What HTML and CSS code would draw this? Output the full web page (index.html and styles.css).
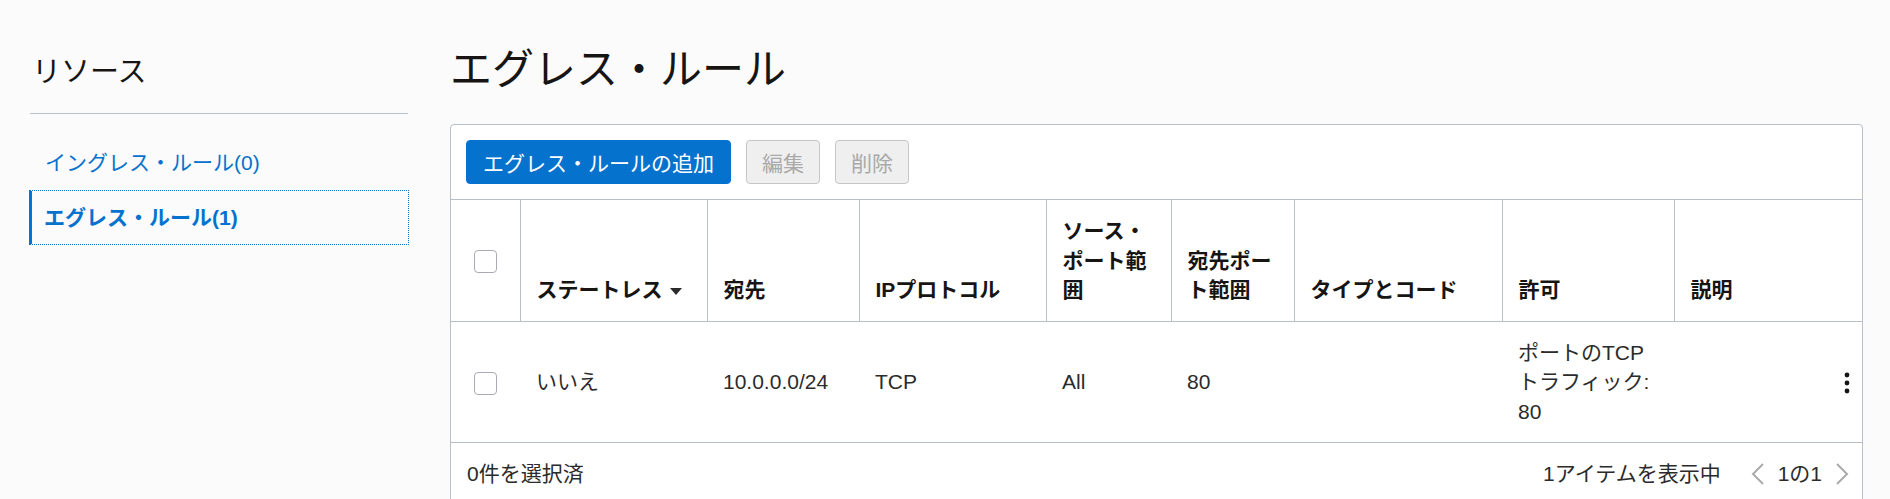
FILE: index.html
```html
<!DOCTYPE html>
<html lang="ja">
<head>
  <meta charset="UTF-8">
  <title>エグレス・ルール</title>
  <link rel="stylesheet" href="styles.css">
</head>
<body>
  <div class="page">
    <aside class="sidebar">
      <h2 class="sidebar-title">リソース</h2>
      <ul class="resource-list">
        <li class="resource-item"><a href="#">イングレス・ルール(0)</a></li>
        <li class="resource-item active"><a href="#">エグレス・ルール(1)</a></li>
      </ul>
    </aside>

    <main class="content">
      <h1 class="page-title">エグレス・ルール</h1>

      <div class="card">
        <div class="toolbar">
          <button class="btn btn-primary">エグレス・ルールの追加</button>
          <button class="btn" disabled>編集</button>
          <button class="btn" disabled>削除</button>
        </div>

        <table class="rules-table">
          <colgroup>
            <col style="width: 69px">
            <col style="width: 187px">
            <col style="width: 152px">
            <col style="width: 187px">
            <col style="width: 125px">
            <col style="width: 123px">
            <col style="width: 208px">
            <col style="width: 172px">
            <col>
          </colgroup>
          <thead>
            <tr>
              <th class="check-cell"><span class="checkbox"></span></th>
              <th>ステートレス <span class="sort-caret"></span></th>
              <th>宛先</th>
              <th>IPプロトコル</th>
              <th>ソース・ポート範囲</th>
              <th>宛先ポート範囲</th>
              <th>タイプとコード</th>
              <th>許可</th>
              <th>説明</th>
            </tr>
          </thead>
          <tbody>
            <tr>
              <td class="check-cell"><span class="checkbox"></span></td>
              <td>いいえ</td>
              <td>10.0.0.0/24</td>
              <td>TCP</td>
              <td>All</td>
              <td>80</td>
              <td></td>
              <td>ポートのTCPトラフィック: 80</td>
              <td class="actions-cell">
                <svg class="kebab" width="6" height="22" viewBox="0 0 6 22">
                  <circle cx="3" cy="3" r="2.4" fill="#161513"/>
                  <circle cx="3" cy="11" r="2.4" fill="#161513"/>
                  <circle cx="3" cy="19" r="2.4" fill="#161513"/>
                </svg>
              </td>
            </tr>
          </tbody>
        </table>

        <div class="table-footer">
          <span>0件を選択済</span>
          <div class="pager">
            <span>1アイテムを表示中</span>
            <svg class="chevron" width="14" height="22" viewBox="0 0 14 22">
              <polyline points="12,1 2,11 12,21" fill="none" stroke="#aaaaaa" stroke-width="2"/>
            </svg>
            <span>1の1</span>
            <svg class="chevron" width="14" height="22" viewBox="0 0 14 22">
              <polyline points="2,1 12,11 2,21" fill="none" stroke="#aaaaaa" stroke-width="2"/>
            </svg>
          </div>
        </div>
      </div>
    </main>
  </div>
</body>
</html>
```

FILE: styles.css
```css
body {
    margin: 0;
    padding: 0;
    background: #fbfbfb;
    color: #161513;
    font-family: "Liberation Sans", "Noto Sans CJK JP", sans-serif;
    font-size: 21px;
    overflow: hidden;
}

.page {
    display: flex;
    gap: 41px;
    padding: 0 27px 0 29px;
}

/* sidebar */

.sidebar {
    width: 380px;
    flex-shrink: 0;
    padding-top: 55px;
}

.sidebar-title {
    margin: 0 1px;
    padding: 0 0 23px 2px;
    font-size: 29px;
    font-weight: normal;
    line-height: 35px;
    border-bottom: 1px solid #b9bfc7;
}

.resource-list {
    list-style: none;
    margin: 21px 0 0 0;
    padding: 0;
}

.resource-item a {
    display: block;
    height: 53px;
    line-height: 53px;
    padding: 0 12px 0 15px;
    border: 1px solid transparent;
    color: #0572ce;
    text-decoration: none;
    font-size: 21px;
}

.resource-item.active a {
    border: 1px dotted #0572ce;
    border-left: 3px solid #0572ce;
    padding-left: 12px;
    font-weight: bold;
}

/* main */

.content {
    flex: 1;
    min-width: 0;
    padding-top: 45px;
}

.page-title {
    margin: 0 0 29px 0;
    font-size: 42px;
    font-weight: normal;
    line-height: 50px;
}

.card {
    background: #fff;
    border: 1px solid #b9bfc7;
    border-radius: 4px;
}

.toolbar {
    display: flex;
    gap: 15px;
    padding: 15px;
    border-bottom: 1px solid #b9bfc7;
}

.btn {
    height: 44px;
    padding: 0 15px;
    font-family: inherit;
    font-size: 21px;
    border-radius: 4px;
    border: 1px solid #c4c6ca;
    background: #efefef;
    color: #a9a9a9;
}

.btn-primary {
    padding: 0 16px;
    background: #0572ce;
    border-color: #0572ce;
    color: #fff;
    cursor: pointer;
}

.rules-table {
    width: 100%;
    table-layout: fixed;
    border-collapse: collapse;
}

.rules-table th {
    padding: 16px;
    text-align: left;
    vertical-align: bottom;
    font-weight: bold;
    line-height: 29.5px;
    border-left: 1px solid #b9bfc7;
    border-bottom: 1px solid #b9bfc7;
}

.rules-table th:first-child {
    border-left: none;
}

.rules-table td {
    padding: 16px;
    vertical-align: middle;
    line-height: 29.5px;
    color: #2b2b2b;
    border-bottom: 1px solid #b9bfc7;
}

.rules-table .check-cell {
    padding: 0;
    text-align: center;
    vertical-align: middle;
}

.checkbox {
    display: inline-block;
    width: 21px;
    height: 21px;
    border: 1px solid #a8acb2;
    border-radius: 4px;
    background: #fff;
    vertical-align: middle;
}

.sort-caret {
    display: inline-block;
    width: 0;
    height: 0;
    margin-left: 2px;
    border-left: 6px solid transparent;
    border-right: 6px solid transparent;
    border-top: 7px solid #2b2b2b;
    vertical-align: middle;
}

.rules-table .actions-cell {
    text-align: right;
    padding-right: 12px;
}

.kebab {
    vertical-align: middle;
}

.table-footer {
    display: flex;
    justify-content: space-between;
    align-items: center;
    padding: 16px 13px 16px 16px;
    line-height: 30px;
    color: #2b2b2b;
}

.pager {
    display: flex;
    align-items: center;
    gap: 13px;
}

.pager .chevron {
    display: block;
}

.pager span:first-child {
    margin-right: 17px;
}
```
